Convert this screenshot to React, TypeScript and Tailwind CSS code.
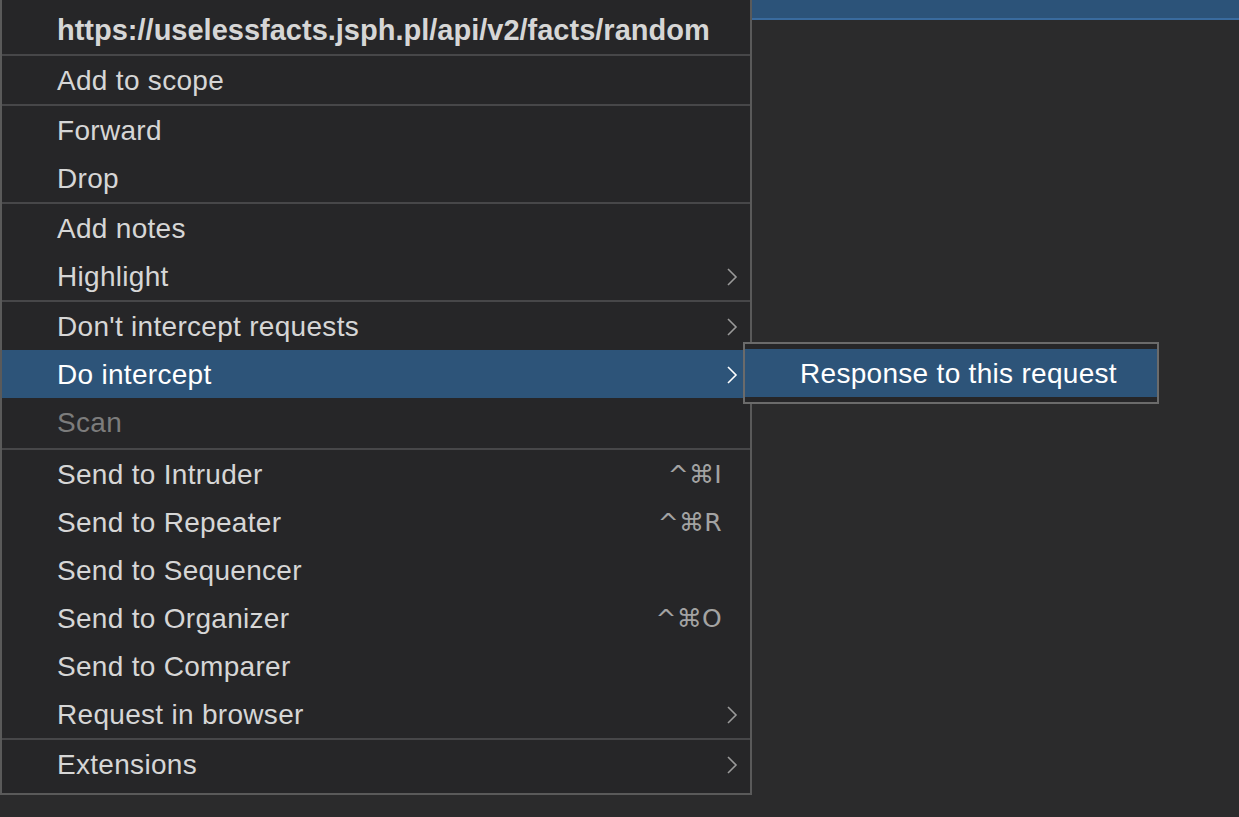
import React from "react";

type Item = {
  label: string;
  shortcut?: string;
  submenu?: boolean;
  disabled?: boolean;
  active?: boolean;
};

const SECTIONS: Item[][] = [
  [{ label: "Add to scope" }],
  [{ label: "Forward" }, { label: "Drop" }],
  [{ label: "Add notes" }, { label: "Highlight", submenu: true }],
  [
    { label: "Don't intercept requests", submenu: true },
    { label: "Do intercept", submenu: true, active: true },
    { label: "Scan", disabled: true },
  ],
  [
    { label: "Send to Intruder", shortcut: "^⌘I" },
    { label: "Send to Repeater", shortcut: "^⌘R" },
    { label: "Send to Sequencer" },
    { label: "Send to Organizer", shortcut: "^⌘O" },
    { label: "Send to Comparer" },
    { label: "Request in browser", submenu: true },
  ],
  [{ label: "Extensions", submenu: true }],
];

const font = { fontFamily: '"Liberation Sans", Arial, "DejaVu Sans", sans-serif' };

function Chevron({ light }: { light?: boolean }) {
  return (
    <svg
      width="12"
      height="20"
      viewBox="0 0 12 20"
      className={light ? "text-white" : "text-[#9a9a9a]"}
      aria-hidden
    >
      <polyline
        points="2,2 10,10 2,18"
        fill="none"
        stroke="currentColor"
        strokeWidth="1.6"
        strokeLinejoin="miter"
      />
    </svg>
  );
}

function MenuRow({ item }: { item: Item }) {
  return (
    <div
      className={[
        "relative flex h-[48px] items-center pl-[55px] pt-[2px] text-[28px] tracking-[0.3px]",
        item.active
          ? "bg-[#2d5479] text-white"
          : item.disabled
            ? "text-[#7c7c7c]"
            : "text-[#d6d6d6]",
      ].join(" ")}
    >
      <span className="flex-1">{item.label}</span>
      {item.shortcut ? (
        <span
          className="pr-[28px] text-[#a3a3a3]"
          style={{ fontFamily: '"DejaVu Sans", "Liberation Sans", sans-serif', fontSize: 25 }}
        >
          {item.shortcut}
        </span>
      ) : null}
      {item.submenu ? (
        <span className="pr-[12px]">
          <Chevron light={item.active} />
        </span>
      ) : null}
      {item.active ? (
        <div className="absolute left-[741px] top-[-8px] z-10 w-[416px] border-2 border-[#6b6b6b] bg-[#262628] py-[5px]">
          <div className="flex h-[48px] items-center bg-[#2d5479] pl-[55px] pt-[2px] text-[28px] tracking-[0.3px] text-white">
            Response to this request
          </div>
        </div>
      ) : null}
    </div>
  );
}

export default function App() {
  return (
    <div className="flex h-[817px] w-full items-start overflow-hidden bg-[#2b2b2c]" style={font}>
      <div className="relative w-[752px] shrink-0 border-x-2 border-b-2 border-[#5a5a5a] bg-[#262628] pt-[6px] pb-[5px]">
        <div className="flex h-[48px] items-center pl-[55px] pt-[2px] text-[29px] font-bold text-[#d6d6d6]">
          https://uselessfacts.jsph.pl/api/v2/facts/random
        </div>
        {SECTIONS.map((section, i) => (
          <div key={i} className={["border-t-2 border-[#474749]", i === 3 ? "pb-[2px]" : ""].join(" ")}>
            {section.map((item) => (
              <MenuRow key={item.label} item={item} />
            ))}
          </div>
        ))}
      </div>
      <div className="flex-1">
        <div className="h-[20px] border-b-2 border-[#3a6b9e] bg-[#2c5379]" />
      </div>
    </div>
  );
}
